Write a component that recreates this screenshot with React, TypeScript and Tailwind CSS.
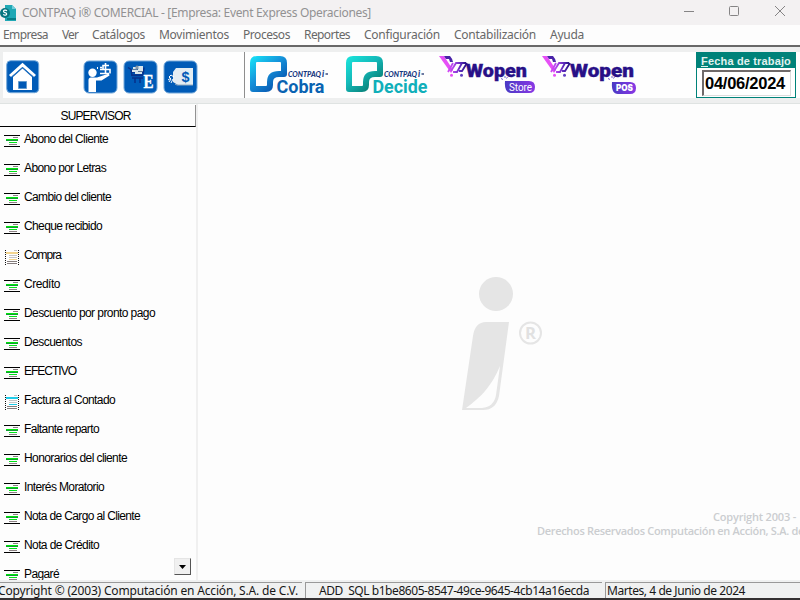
import { useLayoutEffect, useRef } from "react";

/** Single-line label whose letter spacing adapts to fill a given width. */
function Fit({ w, children, className = "" }: { w: number; children: string; className?: string }) {
  const ref = useRef<HTMLSpanElement>(null);
  useLayoutEffect(() => {
    const el = ref.current;
    if (!el) return;
    el.style.letterSpacing = "0px";
    const natural = el.getBoundingClientRect().width;
    el.style.letterSpacing = `${(w - natural) / children.length}px`;
  }, [w, children]);
  return (
    <span ref={ref} className={`inline-block shrink-0 whitespace-pre ${className}`}>
      {children}
    </span>
  );
}

const segoe = "font-['Noto_Sans','Open_Sans',sans-serif]";
const arial = "font-['Liberation_Sans',Arial,sans-serif]";

const menus: [string, number][] = [
  ["Empresa", 45], ["Ver", 16], ["Catálogos", 53], ["Movimientos", 70], ["Procesos", 47],
  ["Reportes", 46], ["Configuración", 76], ["Contabilización", 82], ["Ayuda", 34],
];

const documents: [string, number, string?][] = [
  ["Abono del Cliente", 84], ["Abono por Letras", 82], ["Cambio del cliente", 87],
  ["Cheque recibido", 78], ["Compra", 37, "#f3d58e"], ["Credíto", 36],
  ["Descuento por pronto pago", 131], ["Descuentos", 58], ["EFECTIVO", 52],
  ["Factura al Contado", 91, "#20cbe8"], ["Faltante reparto", 75], ["Honorarios del cliente", 103],
  ["Interés Moratorio", 80], ["Nota de Cargo al Cliente", 116], ["Nota de Crédito", 75], ["Pagaré", 35],
];

function DocIcon({ color }: { color?: string }) {
  if (color) {
    return (
      <svg width="16" height="17" viewBox="0 0 16 17" shapeRendering="crispEdges" className="mt-[9px] shrink-0">
        <path d="M1.5 1v15M14.5 1v15" stroke="#111" strokeDasharray="1 1" />
        <path d="M10 1.5h3M5 6.5h8M5 8.5h8" stroke="#c6c6c6" />
        <path d="M2 4h12" stroke={color} strokeWidth="2" />
        <path d="M5 10.5h8" stroke={color} />
        <path d="M3 12.5h10M3 14.5h10" stroke="#857d7d" />
      </svg>
    );
  }
  return (
    <svg width="16" height="17" viewBox="0 0 16 17" shapeRendering="crispEdges" className="mt-[11px] shrink-0">
      <path d="M0 .5h16M0 11.5h16" stroke="#000" />
      <path d="M9 2.5h5M5 9.5h8" stroke="#8b8083" />
      <path d="M2 4.5h12" stroke="#00e40b" />
      <path d="M2 5.5h12" stroke="#109a31" />
      <path d="M5 7.5h8" stroke="#00e517" />
    </svg>
  );
}

function AppIcon() {
  return (
    <svg width="17" height="17" viewBox="0 0 17 17" className="-mt-px">
      <path d="M5 1h7l4 4v12H5z" fill="#20a8b5" />
      <path d="M12 1l4 4h-4z" fill="#72cddb" />
      <path d="M7 14h9v2H7z" fill="#087d86" />
      <circle cx="5" cy="9" r="5" fill="#087580" />
      <path d="M7 6.7c-1.4-1-3.7-.6-3.5.8.2 1.5 3.2.6 3.2 2.4 0 1.4-2.4 1.6-3.5.5" fill="none" stroke="white" strokeWidth="1.2" />
    </svg>
  );
}

function HomeIcon() {
  return (
    <svg width="34" height="34" viewBox="0 0 34 34">
      <rect x=".7" y=".7" width="32" height="32" rx="4" fill="#005bb7" stroke="#75a9da" />
      <path d="M4 16L16.5 4.8 29 16" fill="none" stroke="white" strokeWidth="3" />
      <path d="M7 17l9.5-8.5L26 17v13H7z" fill="white" />
      <path d="M5.5 17L16.5 7.5 27.5 17" fill="none" stroke="#2f7ac5" strokeWidth=".8" />
      <path d="M12.5 21.5h8v7h-8z" fill="#0059b5" stroke="#629bcd" />
    </svg>
  );
}

function PersonIcon() {
  return (
    <svg width="35" height="34" viewBox="0 0 35 34">
      <rect x="1" y="1" width="33" height="32" rx="5" fill="#005bb7" stroke="#75a9da" />
      <circle cx="9.5" cy="12.8" r="4.2" fill="white" />
      <path d="M5.5 32V20q0-2.5 2.5-2.5h6l12-4 .5 2-8 5h-5.5V32z" fill="white" />
      <path d="M26 5.5h-6v4M17 9.500h10v4M17 13.5h9M22.5 3v11M17 7.5h2" fill="none" stroke="white" strokeWidth="1.6" />
      <path d="M14 7h1v2h-1z" fill="white" />
    </svg>
  );
}

function CartIcon() {
  return (
    <svg width="35" height="34" viewBox="0 0 35 34">
      <rect x="1" y="1" width="33" height="32" rx="5" fill="#005bb7" stroke="#75a9da" />
      <path d="M5 7.5l3 2 1 6h11l1-8M9 18h11M12 18v5M17 18v5M8 12h13M8 15h13" stroke="#06308a" fill="none" strokeWidth="1.5" />
      <path d="M10 7h4v2h-4zM15 6h5v5h-5zM9 10h6v2H9zM12 12h7v2h-7z" fill="#d8e5eb" />
      <path d="M13 6h2v3h-2zM9 9.5h5M15 11.5h5" stroke="#73879a" fill="#93aac0" strokeWidth=".8" />
      <text x="20.5" y="28" fill="white" stroke="white" strokeWidth=".5" fontFamily="Liberation Serif, serif" fontSize="19" fontWeight="bold" textLength="10" lengthAdjust="spacingAndGlyphs">E</text>
    </svg>
  );
}

function TagIcon() {
  return (
    <svg width="35" height="34" viewBox="0 0 35 34">
      <rect x="1" y="1" width="33" height="32" rx="5" fill="#005bb7" stroke="#75a9da" />
      <path d="M13 8h17v17H15l-5-3V12z" fill="#e3edf3" />
      <path d="M12 24l2 1h16" fill="none" stroke="#94aabd" />
      <path d="M11 17l-3-2-2 2 2 2-2 3M10 19l-2 4M5 20l3-2" fill="none" stroke="white" />
      <text x="18.5" y="22" fill="#005bb7" fontFamily="Liberation Sans, Arial, sans-serif" fontSize="15" fontWeight="bold" textLength="8" lengthAdjust="spacingAndGlyphs">$</text>
    </svg>
  );
}

function ContpaqiLogo({ name, width, light, mid, dark, textColor }: {
  name: string; width: number; light: string; mid: string; dark: string; textColor: string;
}) {
  const id = `g-${name}`;
  return (
    <svg width="84" height="42" viewBox="0 0 84 42" className="shrink-0">
      <defs>
        <linearGradient id={id} x1="0" y1="0" x2="0.85" y2="1">
          <stop offset="0" stopColor={light} />
          <stop offset=".45" stopColor={mid} />
          <stop offset="1" stopColor={dark} />
        </linearGradient>
      </defs>
      <path d="M4 34V8Q4 4 8 4H31Q35 4 35 8V19H30Q21 19 21 27V30Q21 34 17 34Z" fill="none" stroke={`url(#${id})`} strokeWidth="6" strokeLinejoin="round" />
      <text x="39" y="22" fill="#163680" fontFamily="Lato, sans-serif" fontWeight="900" fontStyle="italic" fontSize="7.6" textLength="33" lengthAdjust="spacingAndGlyphs">CONTPAQ</text>
      <text x="73" y="22" fill="#163680" fontFamily="Lato, sans-serif" fontWeight="900" fontStyle="italic" fontSize="8.5">i</text>
      <path d="M76.5 19h2.5" stroke="#526392" strokeWidth="1.7" />
      <text x="27.5" y="38" fill={textColor} fontFamily="Roboto, sans-serif" fontWeight="700" fontSize="18.5" textLength={width} lengthAdjust="spacingAndGlyphs">{name}</text>
    </svg>
  );
}

function WopenLogo({ tag, tagX, tagWidth, textX, textWidth, badgeY }: {
  tag: string; tagX: number; tagWidth: number; textX: number; textWidth: number; badgeY: number;
}) {
  const bold = tag === "POS";
  return (
    <svg width="98" height="42" viewBox="0 0 98 42" className="shrink-0">
      <defs>
        <linearGradient id={`cart-${tag}`} gradientUnits="userSpaceOnUse" x1="5" y1="10" x2="27" y2="10">
          <stop offset="0" stopColor="#e64ef8" />
          <stop offset=".4" stopColor="#b846ef" />
          <stop offset=".75" stopColor="#5c2bbb" />
          <stop offset="1" stopColor="#281185" />
        </linearGradient>
        <linearGradient id={`badge-${tag}`}>
          <stop offset="0" stopColor="#493ac4" />
          <stop offset="1" stopColor="#8938e5" />
        </linearGradient>
      </defs>
      <path d="M0 1h5l9 14-2 3z" fill="#e650f6" />
      <path d="M5 1h6q2 2 3 6h-3l-1-3H7z" fill="#4923a8" />
      <path d="M9 17l5-9M12 16l5-8h10M14 17h4l5-9M20 16h3l5-8" fill="none" stroke={`url(#cart-${tag})`} strokeWidth="1.8" />
      <circle cx="12.5" cy="20.3" r="1.5" fill="#e650f6" />
      <circle cx="22.5" cy="20.3" r="1.5" fill="#6140c2" />
      <text x={textX} y="22" fill="#281087" stroke="#281087" strokeWidth=".4" fontFamily="Roboto, sans-serif" fontWeight="900" fontSize="19" textLength={textWidth} lengthAdjust="spacingAndGlyphs">Wopen</text>
      <path d={`M${tagX} ${badgeY}h${tagWidth - 6}q6 0 6 6t-6 6h-${tagWidth - 12}q-7 0-6-12z`} fill={`url(#badge-${tag})`} />
      <path d={`M${tagX - 4} 23.5l2 1M${tagX} 21v2M${tagX + 2.5} 22l-1 1.5`} stroke="#7762cd" />
      <text x={tagX + 4} y={bold ? badgeY + 9.2 : badgeY + 9.5} fill="white" fontFamily={bold ? "Inter, sans-serif" : "Roboto, sans-serif"} fontWeight={bold ? 900 : 400} fontSize={bold ? 9 : 10} textLength={tagWidth - 7} lengthAdjust="spacingAndGlyphs">{tag}</text>
    </svg>
  );
}

function TitleBar() {
  return (
    <header className={`flex h-[25px] shrink-0 items-center bg-[#f3f1f2] text-[12px] leading-[17px] text-[#929192] ${segoe}`}>
      <AppIcon />
      <Fit w={349} className="-mt-px ml-[5px]">CONTPAQ i® COMERCIAL - [Empresa: Event Express Operaciones]</Fit>
      <svg width="104" height="14" viewBox="0 0 104 14" className="-mt-[3px] mr-[14px] ml-auto" fill="none" stroke="#858485">
        <path d="M2 7.5h10" />
        <rect x="47.5" y="2.5" width="9" height="9" rx="1" />
        <path d="M93 2l10 10M103 2L93 12" />
      </svg>
    </header>
  );
}

function WorkDate() {
  return (
    <div className={`flex h-[46px] w-[100px] flex-col border border-[#008279] bg-white ${arial}`}>
      <div className="flex h-[15px] shrink-0 items-center bg-[#008279] pl-[4px] text-[11px] leading-[14px] font-bold text-[#e0f2ef]">
        <span className="flex h-[13px] border-b border-[#e0f2ef]"><Fit w={7}>F</Fit></span><Fit w={83}>echa de trabajo</Fit>
      </div>
      <div className="mt-[2px] ml-[5px] flex h-[26px] w-[89px] items-center border-t-2 border-r border-b border-l-2 border-t-[#6f6a6a] border-r-[#ddd] border-b-[#ddd] border-l-[#6f6a6a] pl-[1px] text-[16.5px] leading-[20px] font-bold text-black">
        <Fit w={80} className="-mt-[2px]">04/06/2024</Fit>
      </div>
    </div>
  );
}

function Toolbar() {
  return (
    <div className="h-[57px] shrink-0 border-b border-[#dfe3e2] bg-[#eeefef] pt-[5px] pl-[3px]">
      <div className="flex h-[46px] bg-[#fefefe]">
        <div className="flex w-[242px] border-r border-[#8e8e8e] pt-[8px] pl-[3px]">
          <HomeIcon />
          <div className="ml-[43px] flex gap-[5px]">
            <PersonIcon /><CartIcon /><TagIcon />
          </div>
        </div>
        <div className="flex pt-[3px] pl-[4px]">
          <ContpaqiLogo name="Cobra" width={48} light="#16d8f4" mid="#1592da" dark="#0750ac" textColor="#0963b2" />
          <div className="ml-[12px]"><ContpaqiLogo name="Decide" width={55} light="#19ded7" mid="#14b9b9" dark="#08786e" textColor="#10afba" /></div>
          <div className="ml-[10px]"><WopenLogo tag="Store" tagX={66} tagWidth={30} textX={27} textWidth={61} badgeY={26} /></div>
          <div className="ml-[5px]"><WopenLogo tag="POS" tagX={70} tagWidth={24} textX={28} textWidth={64} badgeY={27} /></div>
        </div>
        <div className="mr-[4px] ml-auto"><WorkDate /></div>
      </div>
    </div>
  );
}

function Sidebar() {
  return (
    <aside className={`relative flex w-[198px] shrink-0 flex-col overflow-hidden border-r-2 border-[#f0f0f0] text-black ${arial}`}>
      <div className="mt-px flex h-[22px] shrink-0 items-center justify-center border-r border-b border-r-[#929292] border-b-black pr-[4px] text-[12px] leading-[14px]">
        <Fit w={70}>SUPERVISOR</Fit>
      </div>
      <ul className="-mt-[3px] pl-[4px] text-[12px] leading-[14px]">
        {documents.map(([name, w, color]) => (
          <li key={name} className="flex h-[29px] items-start gap-[4px]">
            <DocIcon color={color} />
            <Fit w={w} className="mt-[8px]">{name}</Fit>
          </li>
        ))}
      </ul>
      <button className="absolute right-[5px] bottom-[5px] flex h-[17px] w-[17px] items-center justify-center border border-t-[#e5e5e5] border-r-[#555] border-b-[#555] border-l-[#e5e5e5] bg-[#f0f0f0]" aria-label="▼">
        <svg width="7" height="4" viewBox="0 0 7 4"><path d="M0 0h7L3.5 4z" fill="black" /></svg>
      </button>
    </aside>
  );
}

function Watermark() {
  return (
    <svg width="84" height="136" viewBox="0 0 84 136">
      <circle cx="34" cy="18" r="17" fill="#e5e5e5" />
      <path d="M24 46H47L37 120Q34 134 21 134H0L11 60Q13 46 24 46Z" fill="#e5e5e5" />
      <path d="M38 90C29 111 19 121 4 132H20Q32 131 34 119Z" fill="#fdfdfd" />
      <circle cx="68.5" cy="57" r="10.5" fill="none" stroke="#e5e5e5" strokeWidth="2" />
      <text x="63" y="63" fill="#e1e1e1" fontSize="16" fontWeight="bold" fontFamily="Open Sans, sans-serif" textLength="11" lengthAdjust="spacingAndGlyphs">R</text>
    </svg>
  );
}

function StatusBar() {
  const panel = "flex h-[16px] items-center overflow-hidden border-t border-[#999]";
  return (
    <footer className={`flex h-[20px] shrink-0 border-b-2 border-[#353132] bg-[#f0f1f1] pt-[2px] text-[12px] leading-[15px] text-[#171717] ${segoe}`}>
      <div className={`${panel} w-[302px]`}><Fit w={300} className="-ml-[2px]">Copyright © (2003) Computación en Acción, S.A. de C.V.</Fit></div>
      <div className={`${panel} ml-[3px] w-[297px] border-l pl-[13px]`}><Fit w={270}>ADD  SQL b1be8605-8547-49ce-9645-4cb14a16ecda</Fit></div>
      <div className={`${panel} ml-[3px] w-[195px] border-l pl-px`}><Fit w={138}>Martes, 4 de Junio de 2024</Fit></div>
    </footer>
  );
}

export default function App() {
  return (
    <div className="flex h-[600px] w-[800px] flex-col overflow-hidden bg-[#fdfdfd]">
      <TitleBar />
      <nav className={`flex h-[22px] shrink-0 items-start gap-[11px] border-b-2 border-[#686868] bg-[#fdfdfd] pt-[2px] pl-[3px] text-[12px] leading-[16px] text-[#686868] ${segoe}`}>
        {menus.map(([name, w]) => (
          <span key={name} className="mr-[3px] flex"><Fit w={w}>{name}</Fit></span>
        ))}
      </nav>
      <Toolbar />
      <div className="flex min-h-0 flex-1">
        <Sidebar />
        <main className="flex min-w-0 flex-1 flex-col overflow-hidden">
          <div className="mt-[172px] ml-[264px]"><Watermark /></div>
          <div className="mt-auto mb-[42px] ml-[339px] text-[11px] leading-[14px] font-semibold whitespace-nowrap text-[#cbcdd0] font-['Open_Sans',sans-serif]">
            <div className="ml-[176px]"><Fit w={83}>Copyright 2003 -</Fit></div>
            <div><Fit w={267}>Derechos Reservados Computación en Acción, S.A. de</Fit></div>
          </div>
        </main>
      </div>
      <StatusBar />
    </div>
  );
}
